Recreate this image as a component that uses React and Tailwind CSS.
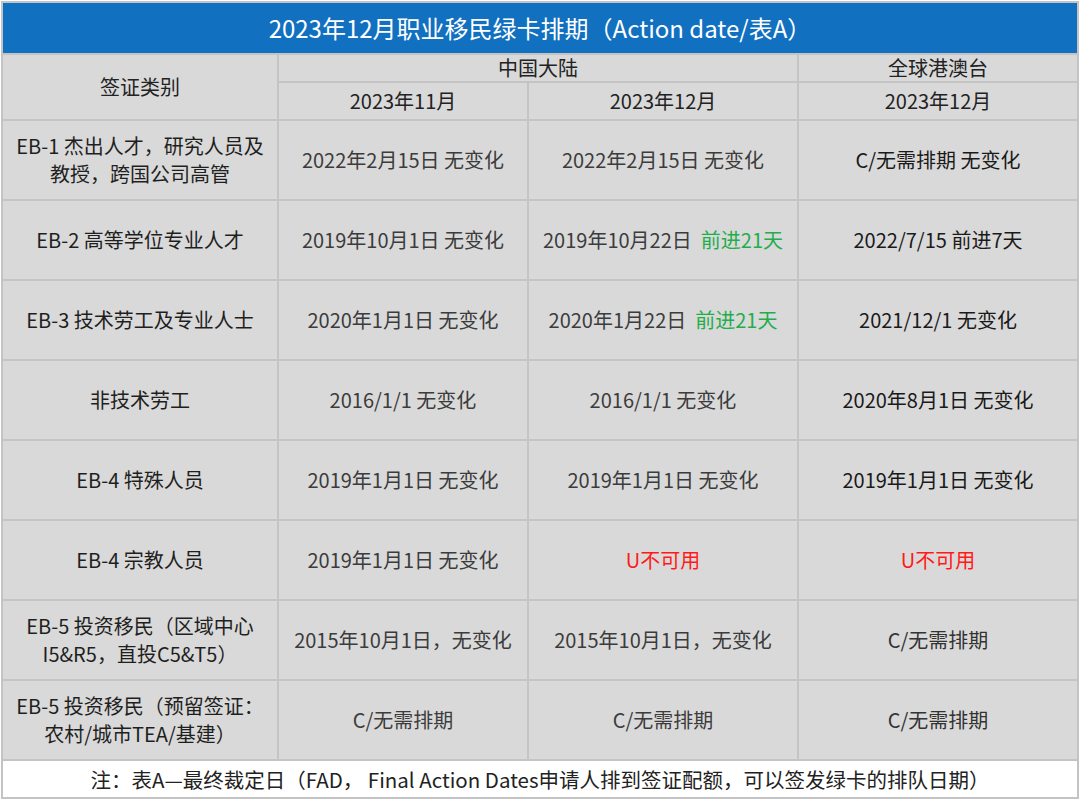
import React from "react";

const F = { fontFamily: '"Noto Sans CJK SC", "Noto Sans", sans-serif' };

function Cell({ children, className = "" }) {
  return (
    <div className={`flex items-center justify-center text-center bg-[#d9d9d9] text-[20px] leading-[28px] ${className}`}>
      {children}
    </div>
  );
}

const G = ({ children }) => <span className="text-[#1fae4b]">{children}</span>;
const R = ({ children }) => <span className="text-[#ff1a1a]">{children}</span>;

const rows = [
  {
    label: (<>EB-1 杰出人才，研究人员及<br />教授，跨国公司高管</>),
    a: "2022年2月15日 无变化",
    b: "2022年2月15日 无变化",
    c: "C/无需排期 无变化",
    cDark: true,
  },
  {
    label: "EB-2 高等学位专业人才",
    a: "2019年10月1日 无变化",
    b: (<>2019年10月22日<span className="inline-block w-[9px]"></span><G>前进21天</G></>),
    c: "2022/7/15 前进7天",
    cDark: true,
  },
  {
    label: "EB-3 技术劳工及专业人士",
    a: "2020年1月1日 无变化",
    b: (<>2020年1月22日<span className="inline-block w-[9px]"></span><G>前进21天</G></>),
    c: "2021/12/1 无变化",
    cDark: true,
  },
  {
    label: "非技术劳工",
    a: "2016/1/1 无变化",
    b: "2016/1/1 无变化",
    c: "2020年8月1日 无变化",
    cDark: true,
  },
  {
    label: "EB-4 特殊人员",
    a: "2019年1月1日 无变化",
    b: "2019年1月1日 无变化",
    c: "2019年1月1日 无变化",
    cDark: true,
  },
  {
    label: "EB-4 宗教人员",
    a: "2019年1月1日 无变化",
    b: <R>U不可用</R>,
    c: <R>U不可用</R>,
  },
  {
    label: (<>EB-5 投资移民（区域中心<br />I5&amp;R5，直投C5&amp;T5）</>),
    a: "2015年10月1日，无变化",
    b: "2015年10月1日，无变化",
    c: "C/无需排期",
  },
  {
    label: (<>EB-5 投资移民（预留签证：<br />农村/城市TEA/基建）</>),
    a: "C/无需排期",
    b: "C/无需排期",
    c: "C/无需排期",
  },
];

export default function App() {
  return (
    <div className="w-[1080px] h-[801px] bg-white overflow-hidden" style={F}>
      <div className="mt-px ml-px w-[1078px] grid grid-cols-[274px_248px_268px_278px] grid-rows-[50px_26px_36px_repeat(8,78px)_36px] gap-[2px] p-[2px] bg-[#c4c4c4]">
        <div className="col-span-4 flex items-center justify-center bg-[#1170bf] text-white text-[24px] leading-[30px]">
          2023年12月职业移民绿卡排期（Action date/表A）
        </div>
        <Cell className="row-span-2 text-[#222]">签证类别</Cell>
        <Cell className="col-span-2 text-[#222] leading-[26px]">中国大陆</Cell>
        <Cell className="text-[#222] leading-[26px]">全球港澳台</Cell>
        <Cell className="text-[#222]">2023年11月</Cell>
        <Cell className="text-[#222]">2023年12月</Cell>
        <Cell className="text-[#222]">2023年12月</Cell>
        {rows.map((r, i) => (
          <React.Fragment key={i}>
            <Cell className="text-[#1f1f1f]">{r.label}</Cell>
            <Cell className="text-[#3c3c3c]">{r.a}</Cell>
            <Cell className="text-[#3c3c3c]">{r.b}</Cell>
            <Cell className={r.cDark ? "text-[#1a1a1a]" : "text-[#333]"}>{r.c}</Cell>
          </React.Fragment>
        ))}
        <div className="col-span-4 flex items-center justify-center bg-white text-[#222] text-[20.5px] leading-[28px]">
          注：表A—最终裁定日（FAD，&nbsp;Final Action Dates申请人排到签证配额，可以签发绿卡的排队日期）
        </div>
      </div>
    </div>
  );
}
